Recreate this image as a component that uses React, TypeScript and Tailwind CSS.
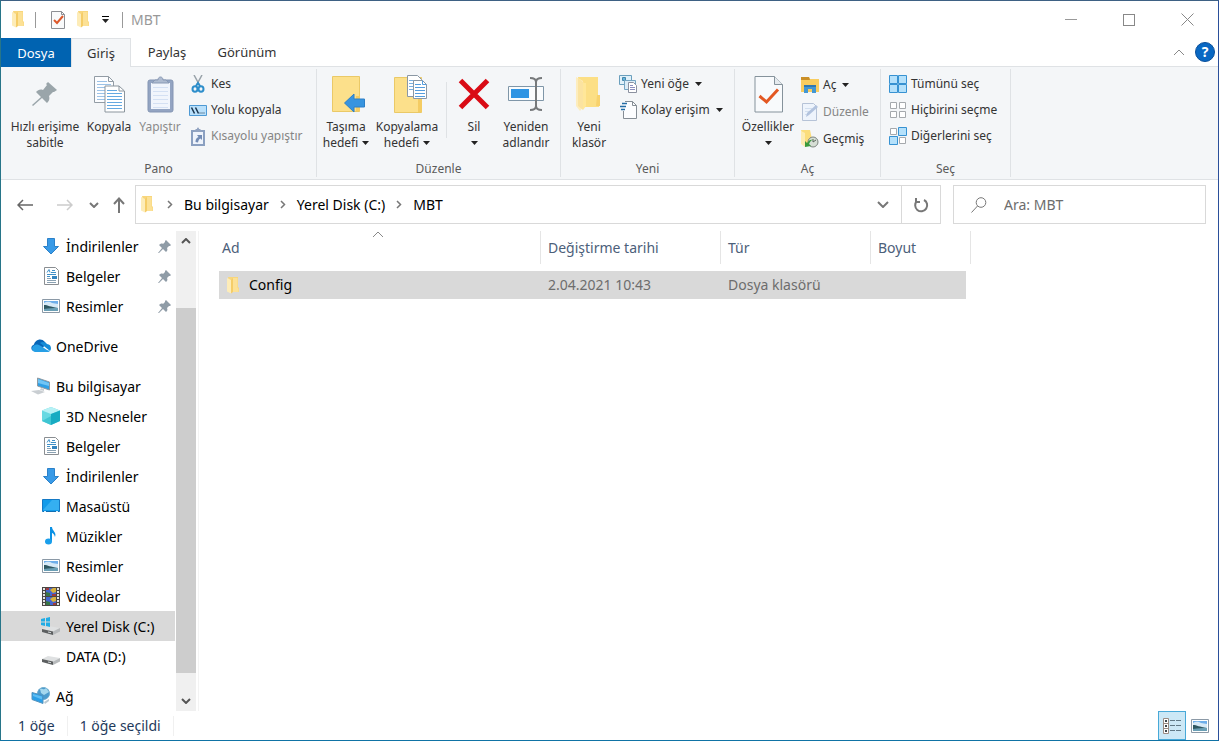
import React from "react";

type P = { className?: string };

const svg = (w: number, h: number, body: React.ReactNode, left = 0) =>
  function Icon({ className = "" }: P) {
    return (
      <svg width={w + left} height={h} viewBox={`${-left} 0 ${w + left} ${h}`} fill="none" aria-hidden="true" className={`shrink-0 ${className}`}>
        {body}
      </svg>
    );
  };

const Folder = svg(13, 17, <>
  <path d="M1 0h10v10.500h1V15H4z" fill="#f8d67c" />
  <path d="M0 1l4 2v13.500l-4-2z" fill="#fdecb8" />
  <path d="M4 3l2-2v14l-2 1.500z" fill="#f5cd68" />
  <path d="M6 1h4.500v10l1 .500V15H6z" fill="#fce196" />
</>);
const BigFolder = svg(28, 36, <>
  <path d="M3 1h20v18h1v12H5z" fill="#fcdf85" />
  <path d="M22 19h3v11h-4z" fill="#f8d26d" />
  <path d="M1 1l7 4v26l-3 4-4-5z" fill="#fdedbd" />
  <path d="M3 2l5 4v28l-5-4z" fill="#fbe3a0" />
  <path d="M9 7h2v23l-3 4V6z" fill="#ffe799" />
</>);
const TaskDoc = svg(14, 18, <>
  <path d="M.5.5h10l3 3v14H.5z" fill="#f9fafb" stroke="#8d8f94" />
  <path d="M10.500.5v3h3" stroke="#8d8f94" />
  <path d="M3 9l3 3 6-7" stroke="#dc582b" strokeWidth="2" />
</>);
const BigTask = svg(29, 37, <>
  <path d="M1 .5h19.500l8 8V36H1z" fill="#f8fafc" stroke="#85929b" />
  <path d="M20.500.5v8h8" fill="#e5eaee" stroke="#85929b" />
  <path d="M5.500 20l7 6L24 13.500" stroke="#e35823" strokeWidth="3" />
</>);
const Pin = svg(26, 26, <path d="M16 1l9 8-3 2-1 0-4 4c1 3 0 5-2 7l-5-5-9 8-1-1 9-8-5-5c2-2 4-3 7-2l4-5-1-1z" fill="#9aa5aa" />);
const SmallPin = svg(13, 13, <path d="M8 0l5 5-1 1h-1L9 8c1 2 0 3-1 4L5 9l-4 4H0l4-5-3-3c1-1 3-2 4-1l2-2V1z" fill="#8f9ca7" />);
const Copy = svg(31, 37, <>
  <path d="M.5.5h14l5 5v21H.5z" fill="#fcfdff" stroke="#929ca5" />
  <path d="M14.500.5v5h5" stroke="#929ca5" />
  <path d="M3 5.500h10M3 8.500h14M3 11.500h14M3 14.500h14M3 17.500h14M3 20.500h14M3 23.500h14" stroke="#9bc2e7" />
  <path d="M11 10h14l5.500 5v21H11z" fill="#fff" stroke="#8b959d" />
  <path d="M25 10v5h5" stroke="#8b959d" />
  <path d="M13 14.500h10M13 17.500h15M13 20.500h15M13 23.500h15M13 26.500h15M13 29.500h15M13 32.500h15" stroke="#65a9e1" />
</>);
const Paste = svg(27, 37, <>
  <rect x="1" y="4" width="25" height="32" rx="2" fill="#93a4c2" stroke="#8495b3" />
  <path d="M4 7h19v26H4z" fill="#f1f5fc" />
  <path d="M6 11.500h15M6 15.500h15M6 19.500h15M6 23.500h15M6 27.500h15M6 31.500h15" stroke="#d4e0f3" />
  <path d="M5 7l3-3h3c0-4 5-4 5 0h3l3 3z" fill="#aebbd0" stroke="#8999b4" />
</>);
const Scissors = svg(14, 18, <>
  <path d="M3 0l6 11M11 0L5 11" stroke="#98a2a9" strokeWidth="1.500" />
  <ellipse cx="4" cy="14" rx="2.500" ry="2.800" stroke="#2d8ecb" strokeWidth="2" />
  <ellipse cx="10" cy="14" rx="2.500" ry="2.800" stroke="#2d8ecb" strokeWidth="2" />
  <path d="M5 11l2-3 2 3" stroke="#2d8ecb" strokeWidth="2" />
</>);
const PathIcon = svg(18, 11, <>
  <path d="M.5.5h17v10H.5z" fill="#b9e0fb" stroke="#4d99d4" />
  <path d="M2.500 2.500l3 6M6.500 2.500l3 6" stroke="#19344d" strokeWidth="1.500" />
  <path d="M10.500 8h1M12.500 8h1M14.500 8h1" stroke="#19344d" />
</>);
const ShortcutPaste = svg(14, 19, <>
  <path d="M1 4h12v14H1z" fill="#eef3fb" stroke="#8ba0c1" strokeWidth="2" />
  <path d="M3 4l2-2h1c0-2 2-2 2 0h1l2 2v1H3z" fill="#91a3c1" />
  <path d="M4.500 15c0-3 1-4 3-5L6 8h5v5l-1.500-1.500c-2 1-2 2-2.500 4z" fill="#738cb5" />
</>);
const MoveTo = svg(33, 37, <>
  <path d="M.5.5h27v35H.5z" fill="#fce08b" stroke="#eac967" />
  <path d="M28 20v15h-4V20z" fill="#f4cc63" />
  <path d="M12.500 27L22 18v5h10.500v8H22v5z" fill="#3794df" stroke="#2c7fc7" />
</>, 5);
const CopyTo = svg(34, 39, <>
  <path d="M.5 2.500h27v35H.5z" fill="#fce08b" stroke="#eac967" />
  <path d="M24 24h4v13h-4z" fill="#f4cc63" />
  <path d="M13.500.5h10l4 4v17h-14z" fill="#fff" stroke="#8b98a4" />
  <path d="M15 5.500h8M15 8.500h5M15 11.500h5M15 14.500h5" stroke="#79afe0" />
  <path d="M19.500 5.500h9l4 4v14h-13z" fill="#fff" stroke="#8b98a4" />
  <path d="M28.500 5.500v4h4M21 9.500h6M21 12.500h10M21 15.500h10M21 18.500h10M21 21.500h10" stroke="#559ddd" />
</>, 7);
const Delete = svg(32, 32, <path d="M2.500 2.500l27 27m0-27l-27 27" stroke="#d90b15" strokeWidth="5" />);
const Rename = svg(37, 34, <>
  <path d="M.5 9.500h35v14H.5z" fill="#fafcfd" stroke="#7f96a8" />
  <path d="M3 12h18v9H3z" fill="#3095e3" />
  <path d="M28 3v28M22 1c4 0 6 1 6 4 0-3 2-4 6-4M22 33c4 0 6-1 6-4 0 3 2 4 6 4" stroke="#76797b" strokeWidth="2" />
</>);
const NewItem = svg(18, 18, <>
  <path d="M.5.5h12v9H.5z" fill="#e0f1fa" stroke="#6a9fbd" />
  <path d="M3.500 2.500h3v3h-3z" fill="#65b5df" stroke="#4687aa" />
  <path d="M5.500 5.500h11v9h-11z" fill="#dcecf6" stroke="#75a5c3" />
  <path d="M9.500 7.500h5l3 3v7h-8z" fill="#fff" stroke="#8b91a0" />
  <path d="M11 10.500h3M11 12.500h5M11 14.500h5" stroke="#8d8fc0" />
</>);
const EasyAccess = svg(17, 18, <>
  <path d="M3.500 5V.5h9l4 4v13h-13V10" fill="#fcfdff" />
  <path d="M5 .5h7.500l4 4v13h-13V10M12.500.5v4h4" stroke="#858d95" />
  <path d="M2 2.500h5M0 5.500h6M1 8.500h4" stroke="#246da5" strokeWidth="1.500" />
</>);
const OpenIcon = svg(18, 16, <>
  <path d="M0 0h8l1 2h9v13H0z" fill="#f8cd60" />
  <path d="M0 0h8l1 3H0z" fill="#ca8f28" />
  <path d="M3 16V8h12v8h-4v-4H7v4z" fill="#4297d4" />
  <path d="M3 8h12v2H3z" fill="#2f78b2" />
</>);
const EditIcon = svg(16, 18, <>
  <path d="M.5.5h11l3 3v14H.5z" fill="#eef4fc" stroke="#b6c3d7" />
  <path d="M3 5.500h7M3 8.500h5M3 11.500h4" stroke="#d2dfef" />
  <path d="M4 14l1-4 9-8 2 2-9 8z" fill="#b2c3de" />
</>);
const HistoryIcon = svg(18, 18, <>
  <path d="M0 0h9l2 9v7H4z" fill="#fbdd7b" />
  <path d="M0 1l4 2v14l-4-3z" fill="#fdecb2" />
  <circle cx="12" cy="12" r="5" fill="#d6ded5" stroke="#7c847e" />
  <path d="M12 9v3l3-2" stroke="#5b665d" />
  <path d="M4 17v-6l2 2c2-3 4-4 6-3-2 0-3 2-4 4l2 2z" fill="#399a3d" />
</>);
const cell = (x: number, y: number, on: boolean) =>
  on ? <path d={`M${x}.5 ${y}.5h8v8h-8z`} fill="#b5e1fb" stroke="#3792d2" /> : <path d={`M${x + 1}.5 ${y + 1}.5h6v6h-6z`} fill="#fff" stroke="#a5a9ad" />;
const SelectAll = svg(18, 18, <>{cell(0, 0, true)}{cell(9, 0, true)}{cell(0, 9, true)}{cell(9, 9, true)}</>);
const SelectNone = svg(18, 18, <>{cell(0, 0, false)}{cell(9, 0, false)}{cell(0, 9, false)}{cell(9, 9, false)}</>);
const Invert = svg(18, 18, <>{cell(0, 0, false)}{cell(9, 0, true)}{cell(0, 9, true)}{cell(9, 9, false)}</>);

const Down = svg(18, 18, <path d="M5.500 1.500h7v8h4L9 17 1.500 9.500h4z" fill="#389ae7" stroke="#2b81c9" />);
const Documents = svg(18, 18, <>
  <path d="M2.500.5h11l3 3v14h-14z" fill="#fff" stroke="#8a8e92" />
  <path d="M5 5.500l2-3 1 3M10 3.500h3M9 5.500h5M5 7.500h9M5 9.500h3" stroke="#4090c8" />
  <path d="M10 9h5v3h-5z" fill="#3484bf" />
  <path d="M5 11.500h4M5 13.500h9M5 15.500h9" stroke="#8ba2b3" />
</>);
const Picture = svg(18, 14, <>
  <path d="M.5.5h17v13H.5z" fill="#fff" stroke="#8b99a6" />
  <path d="M2 2h14v6H2z" fill="#6eaeea" />
  <path d="M2 4c3-2 6-1 8 0l6 1v4H2z" fill="#d5e9f7" />
  <path d="M2 6c4 0 6 2 14 3v1H2z" fill="#2f5862" />
  <path d="M2 10c5-1 9-1 14-1v3H2z" fill="#6a9fb5" />
</>);
const Cloud = svg(20, 14, <>
  <path d="M3 12C0 12-1 7 3 5.500 4 1 10-2 14 3l1 2-7 8z" fill="#0765b7" />
  <path d="M9 4c2-2 6-1 7 1 4 0 5 5 3 7z" fill="#168cd8" />
  <path d="M4 13c-4-1-4-6 0-7 2-1 4 0 6 1l6 4 3 1c-1 1-2 1-3 1z" fill="#279fe5" />
</>);
const Computer = svg(20, 18, <>
  <path d="M6.500 1l12 4v8l-12-4z" fill="#2f9fe5" stroke="#8e99a1" />
  <path d="M7 2l11 4v3L7 6z" fill="#71c5f5" />
  <path d="M10 11l3 1v2l-4-1zM0 14l8-1 6 2-7 2.500z" fill="#c9ced2" />
</>);
const Cube = svg(18, 18, <>
  <path d="M0 3.500L9 0l9 3.500v10.500l-9 4-9-4z" fill="#67d9e2" />
  <path d="M0 3.500L9 0l9 3.500L9 7z" fill="#b7f1f5" />
  <path d="M9 7l9-3.500v10.500l-9 4z" fill="#18abc2" />
  <path d="M0 14l9-5v9z" fill="#3fc5d2" />
</>);
const Desktop = svg(18, 14, <>
  <path d="M.5.5h17v12H.5z" fill="#129bea" stroke="#1479c5" />
  <path d="M10 1h7v10L1 11z" fill="#35aff1" />
  <path d="M1 12.500h16" stroke="#116eb2" /><path d="M2 12.500h2M14 12.500h2" stroke="#d4effd" />
</>);
const Music = svg(18, 18, <>
  <path d="M8 0h2c0 4 5 5 3 10-1-3-2-4-3-4v8H8z" fill="#0b91e4" />
  <ellipse cx="6.500" cy="14.500" rx="3.500" ry="3" fill="#1a9feb" />
</>);
const Video = svg(18, 19, <>
  <path d="M0 0h18v19H0z" fill="#4a4643" />
  <path d="M2 1v18M16 1v18" stroke="#e4e4e4" strokeWidth="2" strokeDasharray="2 1" />
  <path d="M4 1h10v8H4zM4 10h10v8H4z" fill="#4466cf" />
  <path d="M8 3l3-2h3v4l-3 1zM8 12l3-2h3v4l-3 1z" fill="#d8b13c" />
  <path d="M4 5l4 1v3H4zM4 14l4 1v3H4z" fill="#387647" />
  <path d="M4 1h3v2H4zM10 7h4v2h-4zM11 16h3v2h-3z" fill="#a03a40" />
</>);
const drive = <>
  <path d="M1 12l6-3 12 2-7 3.500z" fill="#dfe1e2" />
  <path d="M1 12l11 2.500V18L1 15z" fill="#5c5f60" />
  <path d="M12 14.500l7-3.500v3.500L12 18z" fill="#b7babc" />
  <path d="M7 15l3 .700" stroke="#d6dbdd" />
</>;
const DriveC = svg(20, 19, <>{drive}<path d="M0 2l4-1v3.500H0zM5 1l4-1v4.500H5zM0 5.500h4V9l-4-1zM5 5.500h4V10L5 9z" fill="#20ace5" /></>);
const DriveD = svg(20, 19, drive);
const Network = svg(20, 18, <>
  <circle cx="12.500" cy="6.500" r="6" fill="#4b9bcd" stroke="#6ba9cc" />
  <path d="M9 2c3-1 3 2 6-1l3 4-5 3-3-2z" fill="#a5d8ee" />
  <path d="M13 15l5-3v2l-4 3z" fill="#b9c9d2" />
  <path d="M1 5.500l11 3v8l-11-4z" fill="#2a9fe8" stroke="#5593bd" />
  <path d="M2 7l9 2.500v3L2 9z" fill="#5fbdf2" />
</>);
const Details = svg(20, 18, <>
  <path d="M1.500 1.500h5v15h-5zM1.500 6.500h5M1.500 11.500h5" fill="#fff" stroke="#9a8b82" />
  <path d="M3 3h2v2H3zM3 8h2v2H3zM3 13h2v2H3z" fill="#3d474b" />
  <path d="M8 3.500h5M14 3.500h5M8 8.500h5M14 8.500h5M8 13.500h5M14 13.500h5" stroke="#617986" />
</>);
const Caret = svg(7, 4, <path d="M0 0h7L3.500 4z" fill="#222" />);
const Chevron = svg(10, 6, <path d="M1 1l4 4 4-4" stroke="#777" strokeWidth="2" />);
const WideChevron = svg(12, 7, <path d="M1 1l5 5 5-5" stroke="#777" strokeWidth="2" />);
const ChevronUp = svg(10, 6, <path d="M1 5l4-4 4 4" stroke="#555" strokeWidth="2" />);
const ChevronDown = svg(10, 6, <path d="M1 1l4 4 4-4" stroke="#555" strokeWidth="2" />);
const ThinUp = svg(12, 7, <path d="M1 6l5-5 5 5" stroke="#888" />);
const Crumb = svg(6, 9, <path d="M1 1l3.500 3.500L1 8" stroke="#777" strokeWidth="1.500" />);

function Big({ icon: Icon, lines, width, caret, dim }: { icon: React.FC<P>; lines: string[]; width: string; caret?: boolean; dim?: boolean }) {
  return (
    <button disabled={dim} className={`flex shrink-0 flex-col items-center whitespace-nowrap ${width} ${dim ? "text-[#8b8b8b]" : ""}`}>
      <span className="mb-[5px] flex h-10 items-center"><Icon /></span>
      {lines.map((line, i) => (
        <span key={line} className="flex items-center gap-1">{line}{caret && lines.length > 1 && i === lines.length - 1 && <Caret />}</span>
      ))}
      {caret && lines.length === 1 && <span className="flex h-4 items-center"><Caret /></span>}
    </button>
  );
}

function Small({ icon: Icon, label, caret, dim }: { icon: React.FC<P>; label: string; caret?: boolean; dim?: boolean }) {
  return (
    <button disabled={dim} className={`flex h-[26px] items-center gap-1 whitespace-nowrap ${dim ? "text-[#858585]" : ""}`}>
      <span className="flex w-[18px] justify-center"><Icon /></span>
      {label}
      {caret && <Caret className="ml-0.5" />}
    </button>
  );
}

function Group({ label, width, children }: { label: string; width: string; children: React.ReactNode }) {
  return (
    <section aria-label={label} className={`my-0.5 flex shrink-0 flex-col border-r border-[#dfe2e5] ${width}`}>
      <div className="flex flex-1 items-start">{children}</div>
      <div className="h-4 text-center text-[#5a5a5a]">{label}</div>
    </section>
  );
}

type Item = { label: string; icon: React.FC<P>; root?: boolean; pinned?: boolean; selected?: boolean };
const sections: Item[][] = [
  [
    { label: "İndirilenler", icon: Down, pinned: true },
    { label: "Belgeler", icon: Documents, pinned: true },
    { label: "Resimler", icon: Picture, pinned: true },
  ],
  [{ label: "OneDrive", icon: Cloud, root: true }],
  [
    { label: "Bu bilgisayar", icon: Computer, root: true },
    { label: "3D Nesneler", icon: Cube },
    { label: "Belgeler", icon: Documents },
    { label: "İndirilenler", icon: Down },
    { label: "Masaüstü", icon: Desktop },
    { label: "Müzikler", icon: Music },
    { label: "Resimler", icon: Picture },
    { label: "Videolar", icon: Video },
    { label: "Yerel Disk (C:)", icon: DriveC, selected: true },
    { label: "DATA (D:)", icon: DriveD },
  ],
  [{ label: "Ağ", icon: Network, root: true }],
];

function Sidebar() {
  return (
    <nav aria-label="Gezinti" className="flex w-[174px] shrink-0 flex-col gap-2.5 overflow-hidden text-black">
      {sections.map((items, i) => (
        <ul key={i}>
          {items.map((item) => (
            <li key={item.label}>
              <a href="#" className={`flex h-[30px] items-center whitespace-nowrap pr-1 ${item.root ? "pl-[30px]" : "pl-10"} ${item.selected ? "bg-[#d9d9d9]" : ""}`}>
                <span className="mr-[5px] flex w-5 justify-center"><item.icon /></span>
                <span className="flex-1 pt-0.5">{item.label}</span>
                {item.pinned && <SmallPin />}
              </a>
            </li>
          ))}
        </ul>
      ))}
    </nav>
  );
}

export default function App() {
  return (
    <div className="flex min-h-screen flex-col border border-t-[#3e6184] border-r-[#2b4f9a] border-b-[#0f73a5] border-l-[#277589] bg-white font-['Noto_Sans',sans-serif] text-[14px] leading-5">
      <header className="flex h-[37px] items-center pr-0.5">
        <Folder className="ml-[11px]" />
        <span className="ml-2.5 h-4 w-px bg-[#999]" />
        <button aria-label="Özellikler" className="ml-[15px]"><TaskDoc /></button>
        <button aria-label="Yeni klasör" className="ml-3"><Folder /></button>
        <button aria-label="Hızlı Erişim Araç Çubuğunu Özelleştir" className="ml-3 flex flex-col items-center gap-0.5"><span className="h-px w-[7px] bg-black" /><Caret /></button>
        <span className="ml-[13px] h-4 w-px bg-[#999]" />
        <h1 className="ml-2 flex-1 text-[#999]">MBT</h1>
        <button aria-label="Simge durumuna küçült" className="flex h-full w-[58px] items-center justify-center"><span className="h-px w-3 bg-[#999]" /></button>
        <button aria-label="Ekranı kapla" className="flex h-full w-[58px] items-center justify-center"><span className="size-3 border border-[#888]" /></button>
        <button aria-label="Kapat" className="flex h-full w-[58px] items-center justify-center">
          <svg width="13" height="13" viewBox="0 0 13 13" stroke="#888"><path d="M.5.5l12 12m0-12l-12 12" /></svg>
        </button>
      </header>

      <div className="flex h-[29px] text-[13px] text-[#333]">
        <button className="w-[70px] bg-[#0063b1] text-white">Dosya</button>
        <button className="w-[60px] border border-b-0 border-[#dfe2e5] bg-[#f4f6f8]">Giriş</button>
        <button className="w-[72px] border-b border-[#dfe2e5]">Paylaş</button>
        <button className="w-[88px] border-b border-[#dfe2e5]">Görünüm</button>
        <div className="flex flex-1 items-center justify-end gap-2.5 border-b border-[#dfe2e5] pr-[3px]">
          <button aria-label="Şeridi küçült"><ThinUp /></button>
          <button aria-label="Yardım" className="size-5 rounded-full border border-[#0a4f9a] bg-[#0968c3] text-[14px] leading-[18px] font-bold text-white">?</button>
        </div>
      </div>

      <div className="flex h-[113px] border-b border-[#dfe2e5] bg-[#f4f6f8] text-[12px] leading-4 text-[#333]">
        <Group label="Pano" width="w-[316px]">
          <div className="flex pt-[5px] pl-1">
            <Big icon={Pin} lines={["Hızlı erişime", "sabitle"]} width="w-20" />
            <Big icon={Copy} lines={["Kopyala"]} width="w-12" />
            <Big icon={Paste} lines={["Yapıştır"]} width="w-[54px]" dim />
          </div>
          <div className="pt-0.5 pl-0.5">
            <Small icon={Scissors} label="Kes" />
            <Small icon={PathIcon} label="Yolu kopyala" />
            <Small icon={ShortcutPaste} label="Kısayolu yapıştır" dim />
          </div>
        </Group>
        <Group label="Düzenle" width="w-[244px]">
          <div className="flex pt-[5px]">
            <Big icon={MoveTo} lines={["Taşıma", "hedefi"]} width="w-[58px]" caret />
            <Big icon={CopyTo} lines={["Kopyalama", "hedefi"]} width="w-16" caret />
            <span className="mx-[7px] mt-2 h-14 w-px bg-[#dfe2e5]" />
            <Big icon={Delete} lines={["Sil"]} width="w-10" caret />
            <Big icon={Rename} lines={["Yeniden", "adlandır"]} width="w-16" />
          </div>
        </Group>
        <Group label="Yeni" width="w-[174px]">
          <div className="pt-[5px]"><Big icon={BigFolder} lines={["Yeni", "klasör"]} width="w-[56px]" /></div>
          <div className="pt-0.5 pl-0.5">
            <Small icon={NewItem} label="Yeni öğe" caret />
            <Small icon={EasyAccess} label="Kolay erişim" caret />
          </div>
        </Group>
        <Group label="Aç" width="w-[146px]">
          <div className="pt-[5px]"><Big icon={BigTask} lines={["Özellikler"]} width="w-[66px]" caret /></div>
          <div className="flex flex-col gap-px pt-[3px]">
            <Small icon={OpenIcon} label="Aç" caret />
            <Small icon={EditIcon} label="Düzenle" dim />
            <Small icon={HistoryIcon} label="Geçmiş" />
          </div>
        </Group>
        <Group label="Seç" width="w-[130px]">
          <div className="pt-0.5 pl-2">
            <Small icon={SelectAll} label="Tümünü seç" />
            <Small icon={SelectNone} label="Hiçbirini seçme" />
            <Small icon={Invert} label="Diğerlerini seç" />
          </div>
        </Group>
      </div>

      <div className="flex h-[51px] items-start pt-[5px] pr-3">
        <div className="flex h-[39px] w-[134px] items-center pl-4">
          <button aria-label="Geri"><svg width="16" height="12" viewBox="0 0 16 12" fill="none" stroke="#666" strokeWidth="1.500"><path d="M16 6H1m5-5L1 6l5 5" /></svg></button>
          <button aria-label="İleri" disabled className="ml-6"><svg width="16" height="12" viewBox="0 0 16 12" fill="none" stroke="#ccc" strokeWidth="1.500"><path d="M0 6h15m-5-5l5 5-5 5" /></svg></button>
          <button aria-label="Son konumlar" className="ml-4"><Chevron /></button>
          <button aria-label="Yukarı" className="ml-[14px]"><svg width="13" height="16" viewBox="0 0 13 16" fill="none" stroke="#777" strokeWidth="2"><path d="M6 16V2M1 7l5-5.500L11 7" /></svg></button>
        </div>
        <div className="flex h-[39px] flex-1 items-center border border-[#d9d9d9] text-black">
          <Folder className="ml-[5px]" />
          <nav aria-label="Adres" className="ml-[13px] flex flex-1 items-center gap-[11px]">
            <Crumb /><a href="#">Bu bilgisayar</a>
            <Crumb /><a href="#">Yerel Disk (C:)</a>
            <Crumb /><a href="#">MBT</a>
          </nav>
          <button aria-label="Önceki konumlar" className="px-3"><WideChevron /></button>
          <button aria-label="Yenile" className="flex h-full w-[39px] items-center justify-center border-l border-[#d9d9d9]">
            <svg width="16" height="16" viewBox="0 0 16 16" fill="none" stroke="#777" strokeWidth="2"><path d="M11 3a6 6 0 1 1-7 1M3 1v4h4" /></svg>
          </button>
        </div>
        <label className="ml-3 flex h-[39px] w-[253px] items-center border border-[#d9d9d9] pl-[17px]">
          <svg width="16" height="16" viewBox="0 0 16 16" fill="none" stroke="#777" className="shrink-0"><circle cx="10" cy="5.500" r="4.800" /><path d="M6.500 9L.5 15.500" /></svg>
          <input type="search" aria-label="Ara: MBT" placeholder="Ara: MBT" className="ml-[17px] w-full min-w-0 outline-none placeholder:text-[#6d6d6d]" />
        </label>
      </div>

      <div className="flex flex-1">
        <Sidebar />
        <div className="ml-px flex w-5 shrink-0 flex-col bg-[#f0f0f0]">
          <button aria-label="Yukarı kaydır" className="flex h-5 items-center justify-center"><ChevronUp /></button>
          <div className="flex flex-1 flex-col pt-[57px] pb-[18px]"><div className="flex-1 bg-[#cdcdcd]" /></div>
          <button aria-label="Aşağı kaydır" className="flex h-5 items-center justify-center"><ChevronDown /></button>
        </div>
        <main className="ml-0.5 flex-1 border-l border-[#f3f3f3] pl-5">
          <table className="table-fixed border-separate border-spacing-0 text-left">
            <colgroup>
              <col className="w-[322px]" /><col className="w-[180px]" /><col className="w-[150px]" /><col className="w-[95px]" /><col className="w-[5px]" />
            </colgroup>
            <thead className="text-[#4c607a]">
              <tr className="h-[33px]">
                <th className="relative border-r border-[#e5e5e5] pl-[3px] font-normal">Ad<ThinUp className="absolute top-0 left-[153px]" /></th>
                <th className="border-r border-[#e5e5e5] pl-[7px] font-normal">Değiştirme tarihi</th>
                <th className="border-r border-[#e5e5e5] pl-[7px] font-normal">Tür</th>
                <th className="pl-[7px] font-normal">Boyut</th>
                <td className="border-r border-[#e5e5e5]" />
              </tr>
            </thead>
            <tbody className="text-[#6d6d6d]">
              <tr className="h-[7px]"><td colSpan={5} /></tr>
              <tr className="h-7">
                <td className="bg-[#d9d9d9] pl-2 text-black"><span className="flex items-center gap-[9px]"><Folder />Config</span></td>
                <td className="bg-[#d9d9d9] pl-[7px]">2.04.2021 10:43</td>
                <td className="bg-[#d9d9d9] pl-[7px]">Dosya klasörü</td>
                <td className="bg-[#d9d9d9]" />
                <td />
              </tr>
            </tbody>
          </table>
        </main>
      </div>

      <footer className="flex h-[29px] items-center pl-[17px] text-[#1e395b]">
        <span>1 öğe</span>
        <span className="mx-3 h-5 w-px bg-[#f0f0f0]" />
        <span>1 öğe seçildi</span>
        <span className="ml-3 h-5 w-px bg-[#f0f0f0]" />
        <div className="ml-auto flex items-center pr-[9px]">
          <button aria-label="Ayrıntılar" className="flex h-[29px] w-7 items-center justify-center border border-[#48a9d8] bg-[#cce8f6]"><Details /></button>
          <button aria-label="Büyük simgeler" className="ml-[5px]"><Picture /></button>
        </div>
      </footer>
    </div>
  );
}
